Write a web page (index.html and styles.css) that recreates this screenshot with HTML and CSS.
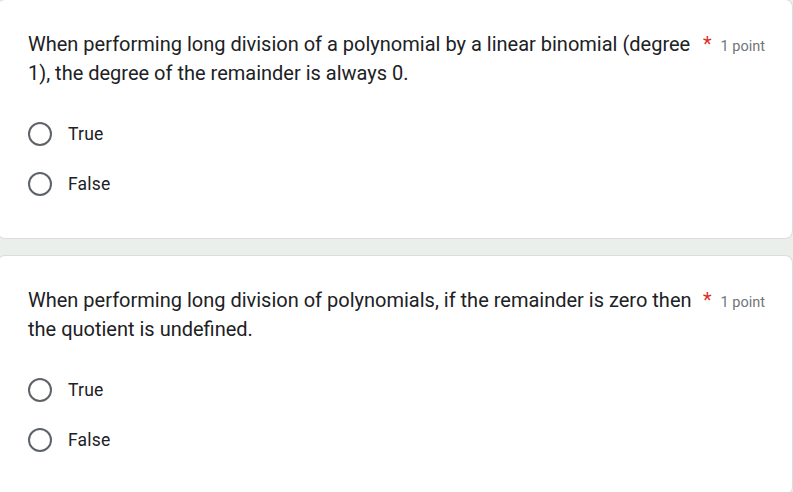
FILE: index.html
```html
<!DOCTYPE html>
<html lang="en">
<head>
<meta charset="utf-8">
<title>Quiz</title>
<link rel="stylesheet" href="styles.css">
</head>
<body>
<div class="page">
  <div class="card card-first">
    <div class="q-head">
      <div class="q-title">When performing long division of a polynomial by a linear binomial (degree 1), the degree of the remainder is always 0.</div>
      <span class="q-req">*</span>
      <span class="q-points">1 point</span>
    </div>
    <div class="options">
      <div class="option"><span class="radio"></span><span class="opt-label">True</span></div>
      <div class="option"><span class="radio"></span><span class="opt-label">False</span></div>
    </div>
  </div>
  <div class="card">
    <div class="q-head">
      <div class="q-title">When performing long division of polynomials, if the remainder is zero then the quotient is undefined.</div>
      <span class="q-req">*</span>
      <span class="q-points">1 point</span>
    </div>
    <div class="options">
      <div class="option"><span class="radio"></span><span class="opt-label">True</span></div>
      <div class="option"><span class="radio"></span><span class="opt-label">False</span></div>
    </div>
  </div>
</div>
</body>
</html>
```
FILE: styles.css
```css
html, body {
  margin: 0;
  padding: 0;
  background: #ebefe9;
  overflow: hidden;
}
body {
  font-family: Roboto, "Liberation Sans", Arial, sans-serif;
  color: #202124;
  width: 793px;
  height: 492px;
}
.page {
  display: flex;
  flex-direction: column;
  gap: 16px;
  margin-top: -1px;
  margin-left: -3px;
  width: 796px;
}
.card {
  background: #fff;
  border: 1px solid #dadce0;
  border-radius: 8px;
  padding: 30px 27px 29px 30px;
}
.q-head {
  display: flex;
  align-items: baseline;
}
.q-title {
  flex: 1;
  font-size: 20px;
  line-height: 29px;
  padding-right: 10px;
}
.q-req {
  color: #d93025;
  font-size: 20px;
  line-height: 29px;
  margin-right: 9px;
}
.q-points {
  color: #70757a;
  font-size: 14.5px;
  line-height: 29px;
  white-space: nowrap;
}
.options {
  display: flex;
  flex-direction: column;
  margin-top: 21px;
}
.option {
  display: flex;
  align-items: center;
  height: 50px;
}
.radio {
  box-sizing: border-box;
  width: 24px;
  height: 24px;
  border: 2.5px solid #5f6368;
  border-radius: 50%;
  margin-right: 16px;
}
.opt-label {
  font-size: 17.5px;
  letter-spacing: 0.2px;
}
```
